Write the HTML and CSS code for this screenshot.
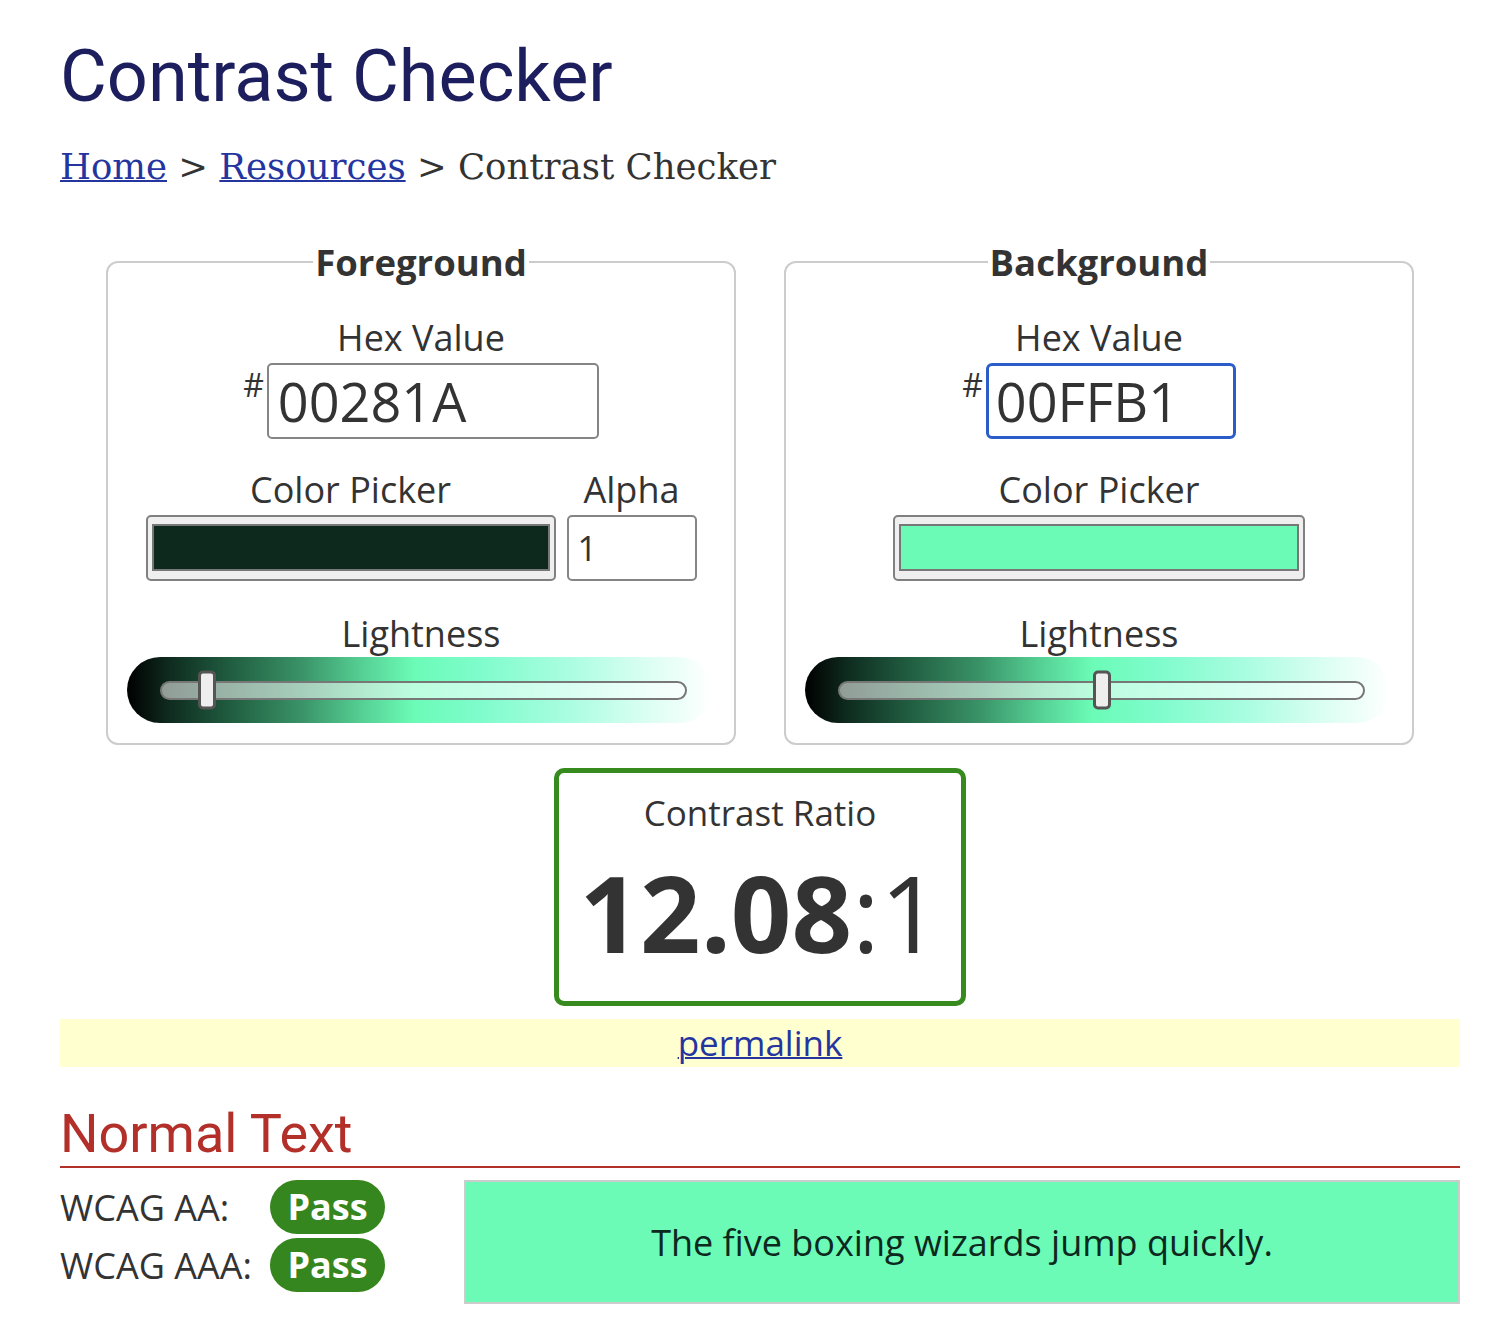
FILE: index.html
```html
<!DOCTYPE html>
<html lang="en">
<head>
<meta charset="utf-8">
<title>Contrast Checker</title>
<link rel="stylesheet" href="styles.css">
</head>
<body>
<main class="page">
  <h1 class="title">Contrast Checker</h1>
  <nav class="crumbs"><a href="#">Home</a> &gt; <a href="#">Resources</a> &gt; Contrast Checker</nav>

  <div class="pickers">
    <fieldset class="panel">
      <legend>Foreground</legend>
      <label class="lbl">Hex Value</label>
      <div class="hexrow"><span class="hash">#</span><input class="hexinput hex-fg" type="text" value="00281A"></div>
      <div class="colorrow">
        <div class="col">
          <span class="lbl">Color Picker</span>
          <div class="swatchbox"><div class="swatch swatch-fg"></div></div>
        </div>
        <div class="col">
          <span class="lbl">Alpha</span>
          <input class="alpha" type="text" value="1">
        </div>
      </div>
      <span class="lbl lbl-light">Lightness</span>
      <div class="slider"><div class="track"><div class="thumb" style="left: calc(8.6% - 9px)"></div></div></div>
    </fieldset>

    <fieldset class="panel">
      <legend>Background</legend>
      <label class="lbl">Hex Value</label>
      <div class="hexrow"><span class="hash">#</span><input class="hexinput hex-bg" type="text" value="00FFB1"></div>
      <div class="colorrow">
        <div class="col">
          <span class="lbl">Color Picker</span>
          <div class="swatchbox swatchbox-bg"><div class="swatch swatch-bg"></div></div>
        </div>
      </div>
      <span class="lbl lbl-light">Lightness</span>
      <div class="slider"><div class="track"><div class="thumb" style="left: calc(50% - 9px)"></div></div></div>
    </fieldset>
  </div>

  <section class="ratio">
    <div class="ratio-label">Contrast Ratio</div>
    <div class="ratio-value"><b>12.08</b>:1</div>
  </section>

  <div class="permabar"><a href="#">permalink</a></div>

  <h2 class="section-title">Normal Text</h2>
  <div class="results">
    <div class="levels">
      <div class="level"><span class="level-name">WCAG AA:</span><span class="badge">Pass</span></div>
      <div class="level"><span class="level-name">WCAG AAA:</span><span class="badge">Pass</span></div>
    </div>
    <div class="sample">The five boxing wizards jump quickly.</div>
  </div>
</main>
</body>
</html>
```

FILE: styles.css
```css
* { box-sizing: border-box; }
html, body { margin: 0; padding: 0; background: #fff; }
body { font-family: "Open Sans", sans-serif; color: #333; }

.page { width: 1400px; margin-left: 60px; padding-bottom: 30px; }

.title {
  font-family: Roboto, sans-serif;
  font-weight: 400;
  font-size: 72px;
  line-height: 86px;
  color: #1c1e5e;
  margin: 34px 0 0;
}

.crumbs {
  font-family: "DejaVu Serif", serif;
  font-size: 35.5px;
  line-height: 44px;
  margin-top: 25px;
  color: #333;
}
.crumbs a { color: #2535a0; text-decoration-thickness: 2px; }

.pickers { display: flex; justify-content: center; gap: 48px; margin-top: 51px; }

.panel {
  width: 630px;
  margin: 0;
  padding: 32px 19px 20px;
  border: 2px solid #ccc;
  border-radius: 12px;
  display: flex;
  flex-direction: column;
  align-items: center;
}
.panel legend {
  font-weight: 700;
  font-size: 36.5px;
  line-height: 44px;
  padding: 0 2px;
  margin: 0 auto;
  color: #333;
}

.lbl { display: block; font-size: 36px; line-height: 44px; text-align: center; color: #333; }

.hexrow { display: flex; justify-content: center; align-items: flex-start; margin-top: 3px; height: 76px; }
.hash { font-size: 32px; line-height: 44px; margin-right: 3px; }
.hexinput {
  height: 76px;
  border: 2px solid #858585;
  border-radius: 5px;
  font-family: "Open Sans", sans-serif;
  font-size: 54px;
  color: #333;
  padding: 0 0 0 9px;
  background: #fff;
  outline: none;
}
.hex-fg { width: 332px; }
.hex-bg { width: 250px; border: 3px solid #2b5dc9; padding-left: 7px; border-radius: 6px; }

.colorrow { display: flex; justify-content: center; gap: 11px; margin-top: 29px; }
.col { display: flex; flex-direction: column; align-items: center; gap: 3px; }

.swatchbox {
  width: 410px;
  height: 66px;
  background: #efefef;
  border: 2px solid #808080;
  border-radius: 5px;
  padding: 7px 4px 8px;
}
.swatchbox-bg { width: 412px; }
.swatch { width: 100%; height: 100%; border: 2px solid #777; }
.swatch-fg { background: #0d291e; }
.swatch-bg { background: #6bfbb7; }

.alpha {
  width: 130px;
  height: 66px;
  border: 2px solid #858585;
  border-radius: 5px;
  font-family: "Open Sans", sans-serif;
  font-size: 34px;
  color: #333;
  padding: 0 0 0 9px;
  background: #fff;
  outline: none;
}

.lbl-light { margin-top: 31px; }

.slider {
  align-self: flex-start;
  width: 585px;
  height: 66px;
  margin-top: 1px;
  border-radius: 33px;
  display: flex;
  align-items: center;
  padding-left: 33px;
  background: linear-gradient(to right, #000 0%, #0e2a1e 7%, #1f5a3e 17%, #3a9468 30%, #55cf93 40%, #6bfbb7 49%, #7efccb 60%, #a8fde0 75%, #d8fef2 88%, #fff 100%);
}
.track {
  position: relative;
  width: 527px;
  height: 19px;
  border: 2px solid #777;
  border-radius: 10px;
  background: rgba(255, 255, 255, 0.55);
}
.thumb {
  position: absolute;
  top: 50%;
  transform: translateY(-50%);
  width: 18px;
  height: 39px;
  background: #eee;
  border: 3px solid #555;
  border-radius: 5px;
}

.ratio {
  width: 412px;
  margin: 23px auto 0;
  border: 5px solid #368a1e;
  border-radius: 10px;
  padding: 18px 0 29px;
  text-align: center;
}
.ratio-label { font-size: 35px; line-height: 44px; }
.ratio-value { margin-top: 17px; font-size: 106px; line-height: 120px; font-weight: 400; color: #333; }
.ratio-value b { font-weight: 700; }

.permabar {
  margin-top: 13px;
  height: 48px;
  background: #ffffd0;
  text-align: center;
  font-size: 35px;
  line-height: 48px;
}
.permabar a { color: #2535a0; text-decoration-thickness: 2px; }

.section-title {
  font-family: Roboto, sans-serif;
  font-weight: 400;
  font-size: 54px;
  line-height: 64px;
  color: #b3302a;
  margin: 35px 0 0;
  border-bottom: 2px solid #b3302a;
}

.results { display: flex; margin-top: 12px; }
.levels { width: 404px; display: flex; flex-direction: column; gap: 4px; }
.level { display: flex; align-items: center; height: 54px; }
.level-name { width: 210px; font-size: 36px; color: #333; }
.badge {
  width: 115px;
  height: 54px;
  border-radius: 27px;
  background: #36861f;
  color: #fff;
  font-weight: 700;
  font-size: 36px;
  line-height: 54px;
  text-align: center;
}

.sample {
  flex: 1;
  height: 124px;
  border: 2px solid #ccc;
  background: #6bfbb7;
  color: #0d291e;
  font-size: 36px;
  display: flex;
  align-items: center;
  justify-content: center;
}
```
